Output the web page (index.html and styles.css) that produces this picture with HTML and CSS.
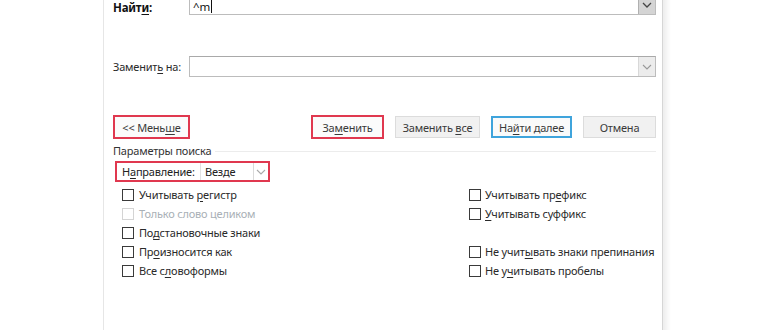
FILE: index.html
```html
<!DOCTYPE html>
<html lang="ru">
<head>
<meta charset="utf-8">
<link rel="stylesheet" href="styles.css">
</head>
<body>
<div class="dialog">
  <div class="field-row">
    <label class="field-label bold">Найт<u>и</u>:</label>
    <div class="combo">
      <div class="combo-text"><span>^m</span><span class="caret"></span></div>
      <div class="combo-btn active"><svg width="10" height="6" viewBox="0 0 10 6"><path d="M1 1 L5 5 L9 1" fill="none" stroke="#444" stroke-width="1.3"/></svg></div>
    </div>
  </div>
  <div class="field-row second">
    <label class="field-label">Заменит<u>ь</u> на:</label>
    <div class="combo">
      <div class="combo-text"></div>
      <div class="combo-btn"><svg width="10" height="6" viewBox="0 0 10 6"><path d="M1 1 L5 5 L9 1" fill="none" stroke="#999" stroke-width="1.1"/></svg></div>
    </div>
  </div>
  <div class="button-row">
    <div class="btn btn-less hl"><span>&lt;&lt; Мень<u>ш</u>е</span></div>
    <div class="btn-group">
      <div class="btn btn-replace hl"><span>За<u>м</u>енить</span></div>
      <div class="btn btn-all"><span>Заменить <u>в</u>се</span></div>
      <div class="btn btn-next focus"><span>На<u>й</u>ти далее</span></div>
      <div class="btn btn-cancel"><span>Отмена</span></div>
    </div>
  </div>
  <div class="group-head"><span>Параметры поиска</span><div class="group-line"></div></div>
  <div class="dir-row">
    <div class="dir hl">
      <span class="dir-label">Н<u>а</u>правление:</span>
      <div class="dir-combo"><span class="dir-value">Везде</span><div class="dir-btn"><svg width="10" height="6" viewBox="0 0 10 6"><path d="M1 1 L5 5 L9 1" fill="none" stroke="#aaa" stroke-width="1.1"/></svg></div></div>
    </div>
  </div>
  <div class="options">
    <div class="col col-left">
      <div class="opt"><span class="box"></span><span>Учитывать <u>р</u>егистр</span></div>
      <div class="opt disabled"><span class="box"></span><span>Только слово целиком</span></div>
      <div class="opt"><span class="box"></span><span>По<u>д</u>становочные знаки</span></div>
      <div class="opt"><span class="box"></span><span>Пр<u>о</u>износится как</span></div>
      <div class="opt"><span class="box"></span><span>Все с<u>л</u>овоформы</span></div>
    </div>
    <div class="col col-right">
      <div class="opt"><span class="box"></span><span>Учитывать пр<u>е</u>фикс</span></div>
      <div class="opt"><span class="box"></span><span><u>У</u>читывать суффикс</span></div>
      <div class="opt empty"></div>
      <div class="opt"><span class="box"></span><span>Не учит<u>ы</u>вать знаки препинания</span></div>
      <div class="opt"><span class="box"></span><span>Не у<u>ч</u>итывать пробелы</span></div>
    </div>
  </div>
</div>
</body>
</html>
```

FILE: styles.css
```css
html, body {
  margin: 0;
  padding: 0;
  background: #ffffff;
  overflow: hidden;
}
body {
  width: 770px;
  height: 330px;
  font-family: "Noto Sans", "Open Sans", sans-serif;
  font-size: 11px;
  letter-spacing: -0.2px;
  color: #2a2a2a;
}
u {
  text-decoration: underline;
  text-underline-offset: 2px;
}
.dialog {
  margin-top: -6px;
  margin-left: 103px;
  width: 543px;
  height: 350px;
  padding: 0 6px 0 9px;
  border-left: 1px solid #e6e6e6;
  border-right: 1px solid #d6d6d6;
  box-shadow: 4px 0 5px rgba(0, 0, 0, 0.07);
  background: #fff;
}
.field-row {
  display: flex;
  align-items: center;
  height: 21px;
}
.field-row.second {
  margin-top: 41px;
}
.field-label {
  width: 76px;
  flex: none;
  line-height: 14px;
  white-space: nowrap;
}
.field-row:first-child .field-label {
  align-self: flex-end;
  margin-bottom: 1px;
  line-height: 13px;
}
.bold {
  font-weight: bold;
  color: #111;
  font-size: 11.5px;
}
.combo {
  flex: 1;
  display: flex;
  height: 21px;
  box-sizing: border-box;
  border: 1px solid #bcbcbc;
  border-top-color: #a9a9a9;
  background: #fff;
}
.combo-text {
  flex: 1;
  padding-left: 3px;
  color: #111;
  display: flex;
  align-items: flex-end;
  padding-bottom: 1px;
  font-size: 11.5px;
  line-height: 13px;
}
.caret {
  display: inline-block;
  width: 1px;
  height: 15px;
  background: #111;
  margin-left: 1px;
}
.combo-btn {
  width: 16px;
  display: flex;
  align-items: center;
  justify-content: center;
  background: #ececec;
  border-left: 1px solid #d8d8d8;
}
.combo-btn.active {
  background: #d4d4d4;
  border-left-color: #b0b0b0;
}
.button-row {
  margin-top: 38px;
  display: flex;
  justify-content: space-between;
  align-items: center;
}
.btn-group {
  display: flex;
  gap: 11px;
  align-items: center;
}
.btn {
  box-sizing: border-box;
  height: 22px;
  display: flex;
  align-items: center;
  justify-content: center;
  background: #f1f1f1;
  border: 1px solid #dcdcdc;
  color: #3a3a3a;
  white-space: nowrap;
}
.btn.hl {
  border: 2px solid #e0384f;
  background: #fbfbfb;
  height: 24px;
}
.btn-less { width: 77px; }
.btn-replace { width: 73px; }
.btn-all { width: 85px; }
.btn-next { width: 81px; }
.btn-cancel { width: 73px; }
.btn.focus {
  border: 2px solid #3fa4dc;
  background: #fafafa;
}
.group-head {
  display: flex;
  align-items: center;
  margin-top: 5px;
  height: 14px;
  line-height: 14px;
  color: #333;
}
.group-line {
  flex: 1;
  height: 1px;
  background: #ececec;
  margin-left: 4px;
}
.dir-row {
  margin-top: 3px;
  padding-left: 2px;
}
.dir {
  display: flex;
  align-items: center;
  width: 155px;
  height: 21px;
  box-sizing: border-box;
  border: 2px solid #e0384f;
  padding-left: 5px;
}
.dir-label {
  width: 78px;
  flex: none;
  color: #222;
  white-space: nowrap;
}
.dir-combo {
  flex: 1;
  display: flex;
  align-items: center;
  height: 17px;
  border-left: 1px solid #e2e2e2;
}
.dir-value {
  flex: 1;
  padding-left: 4px;
  color: #222;
}
.dir-btn {
  width: 14px;
  height: 17px;
  display: flex;
  align-items: center;
  justify-content: center;
  border-left: 1px solid #dadada;
}
.options {
  display: flex;
  margin-top: 3px;
}
.col {
  display: flex;
  flex-direction: column;
  flex: none;
}
.col-left {
  padding-left: 9px;
  width: 347px;
}
.opt {
  display: flex;
  align-items: center;
  height: 19px;
  white-space: nowrap;
  color: #2a2a2a;
}
.box {
  width: 12px;
  height: 12px;
  box-sizing: border-box;
  border: 1px solid #3a3a3a;
  margin-right: 5px;
  background: #fff;
  flex: none;
}
.col-right .box {
  margin-right: 4px;
}
.opt.disabled {
  color: #a9b0b6;
}
.opt.disabled .box {
  border-color: #d4d4d4;
}
```
